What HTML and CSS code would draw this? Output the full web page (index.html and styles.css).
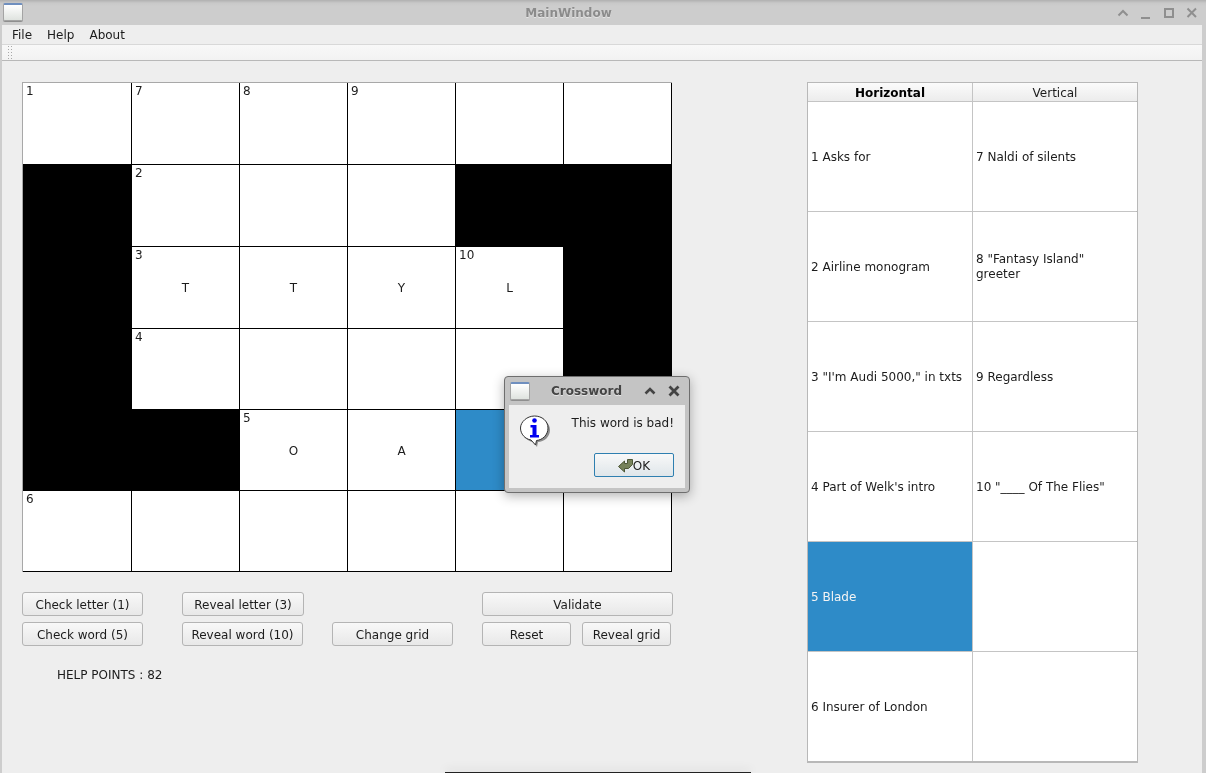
FILE: index.html
```html
<!DOCTYPE html>
<html lang="en">
<head>
<meta charset="utf-8">
<title>MainWindow</title>
<link rel="stylesheet" href="styles.css">
</head>
<body>
<div class="window">
  <header class="titlebar">
    <span class="win-icon"></span>
    <span class="title">MainWindow</span>
    <div class="controls">
      <svg class="ctl" width="14" height="14" viewBox="0 0 14 14"><path d="M2.500 9.500 7 5l4.500 4.500" fill="none" stroke="#8f8f8f" stroke-width="2"/></svg>
      <svg class="ctl" width="14" height="14" viewBox="0 0 14 14"><path d="M2 12h9" fill="none" stroke="#8f8f8f" stroke-width="2"/></svg>
      <svg class="ctl" width="14" height="14" viewBox="0 0 14 14"><path d="M3 3h8v8H3z" fill="none" stroke="#8f8f8f" stroke-width="2"/></svg>
      <svg class="ctl" width="14" height="14" viewBox="0 0 14 14"><path d="m2.500 2.500 8.500 8.500M11 2.500 2.500 11" fill="none" stroke="#8f8f8f" stroke-width="2"/></svg>
    </div>
  </header>
  <div class="inner">
    <nav class="menubar"><span>File</span><span>Help</span><span>About</span></nav>
    <div class="toolbar"><span class="grip"></span></div>
    <main class="content">
      <section class="left">
        <div class="board">
          <div class="cell"><i>1</i></div><div class="cell"><i>7</i></div><div class="cell"><i>8</i></div><div class="cell"><i>9</i></div><div class="cell"></div><div class="cell"></div>
          <div class="cell black"></div><div class="cell"><i>2</i></div><div class="cell"></div><div class="cell"></div><div class="cell black"></div><div class="cell black"></div>
          <div class="cell black"></div><div class="cell"><i>3</i>T</div><div class="cell">T</div><div class="cell">Y</div><div class="cell"><i>10</i>L</div><div class="cell black"></div>
          <div class="cell black"></div><div class="cell"><i>4</i></div><div class="cell"></div><div class="cell"></div><div class="cell"></div><div class="cell black"></div>
          <div class="cell black"></div><div class="cell black"></div><div class="cell"><i>5</i>O</div><div class="cell">A</div><div class="cell blue"></div><div class="cell"></div>
          <div class="cell"><i>6</i></div><div class="cell"></div><div class="cell"></div><div class="cell"></div><div class="cell"></div><div class="cell"></div>
        </div>
        <div class="actions">
          <button class="btn a1">Check letter (1)</button>
          <button class="btn a2">Reveal letter (3)</button>
          <button class="btn a3">Validate</button>
          <button class="btn b1">Check word (5)</button>
          <button class="btn b2">Reveal word (10)</button>
          <button class="btn b3">Change grid</button>
          <button class="btn b4">Reset</button>
          <button class="btn b5">Reveal grid</button>
        </div>
        <p class="points">HELP POINTS : 82</p>
      </section>
      <section class="clues">
        <div class="head strong">Horizontal</div><div class="head">Vertical</div>
        <div class="clue">1 Asks for</div><div class="clue">7 Naldi of silents</div>
        <div class="clue">2 Airline monogram</div><div class="clue wrap">8 "Fantasy Island" greeter</div>
        <div class="clue">3 "I'm Audi 5000," in txts</div><div class="clue">9 Regardless</div>
        <div class="clue">4 Part of Welk's intro</div><div class="clue">10 "____ Of The Flies"</div>
        <div class="clue selected">5 Blade</div><div class="clue"></div>
        <div class="clue">6 Insurer of London</div><div class="clue"></div>
      </section>
    </main>
  </div>
</div>

<div class="dialog">
  <div class="dlg-title">
    <span class="win-icon"></span>
    <span class="dlg-name">Crossword</span>
    <svg width="14" height="14" viewBox="0 0 14 14"><path d="M2.500 9.500 7 5l4.500 4.500" fill="none" stroke="#444" stroke-width="2.600"/></svg>
    <svg width="14" height="14" viewBox="0 0 14 14"><path d="m2.500 2.500 9 9M11.500 2.500l-9 9" fill="none" stroke="#444" stroke-width="2.800"/></svg>
  </div>
  <div class="dlg-body">
    <div class="dlg-main">
      <svg class="info" width="34" height="34" viewBox="0 0 34 34">
        <path d="M17 4c8 0 14 5 14 12s-6 12-12 12l-1 5-4-5C8 27 3 22 3 16S9 4 17 4z" fill="#8d8d8d"/>
        <path d="M15.500 2C23 2 29 7 29 14s-5.500 12-11.500 12.500L16.500 31 12 26C6 25 1.500 20 1.500 14S8 2 15.500 2z" fill="#fff" stroke="#333" stroke-width="1"/>
        <circle cx="15.500" cy="6.500" r="2.300" fill="#0000f0"/>
        <path d="M11.500 11h6v10h2.500v2.500h-9V21h2.500v-7.500h-2z" fill="#0000f0"/>
      </svg>
      <span class="dlg-text">This word is bad!</span>
    </div>
    <button class="ok">
      <svg width="15" height="15" viewBox="0 0 15 15"><path d="M0.500 8.500 6.500 3v2.500H9.500V1.500h5v5l-4 4H6.500V14z" fill="#76825a" stroke="#4c5636" stroke-width="1"/></svg>OK
    </button>
  </div>
</div>

<div class="behind"></div>
</body>
</html>
```

FILE: styles.css
```css
* { box-sizing: border-box; }
html, body { margin: 0; height: 100%; overflow: hidden; }
body {
  width: 1206px;
  height: 773px;
  background: #eeeeee;
  font-family: "DejaVu Sans", sans-serif;
  font-size: 12px;
  color: #1c1c1c;
  position: relative;
}
.window { display: flex; flex-direction: column; height: 773px; background: #cdcdcd; will-change: transform; }
.titlebar {
  height: 25px;
  flex: none;
  display: flex;
  align-items: center;
  position: relative;
  background: linear-gradient(#b0b0b0 0, #c8c8c8 3px, #cdcdcd 6px);
}
.win-icon {
  display: block;
  flex: none;
  width: 20px;
  height: 18px;
  border: 1px solid #a4a4a4;
  border-top: 2px solid #6f8fbf;
  border-radius: 2px;
  background: linear-gradient(#fff, #dfe3df);
  box-shadow: 0 1px 0 #8f8f8f;
}
.titlebar .win-icon { margin: 0 0 2px 3px; }
.title {
  flex: 1;
  text-align: center;
  margin-right: 2px;
  font-weight: bold;
  color: #8b8b8b;
  text-shadow: 0 1px 0 #e4e4e4;
}
.controls { display: flex; gap: 9px; margin-right: 7px; }
.ctl { display: block; }
.inner { flex: 1; margin: 0 4px 0 2px; display: flex; flex-direction: column; background: #eeeeee; min-height: 0; }
.menubar { height: 19px; flex: none; display: flex; align-items: center; padding-left: 10px; gap: 15px; color: #1c1c1c; }
.toolbar {
  height: 17px;
  flex: none;
  background: linear-gradient(#f8f8f8, #f2f2f2);
  border-top: 1px solid #d8d8d8;
  border-bottom: 1px solid #b8b8b8;
  padding-left: 5px;
}
.grip {
  display: block;
  width: 5px;
  height: 15px;
  background-image: radial-gradient(circle, #a8a8a8 0.7px, transparent 0.8px);
  background-size: 3px 3px;
}
.content { flex: 1; display: flex; min-height: 0; }
.left { width: 805px; flex: none; padding: 21px 0 0 20px; }
.board {
  width: 650px;
  display: grid;
  grid-template-columns: 108px repeat(5, 107px);
  grid-template-rows: 81px 81px 81px 80px 80px 80px;
  gap: 1px;
  padding: 0 1px 1px 0;
  background: #000;
  border-left: 1px solid #a8a8a8;
  border-top: 1px solid #a8a8a8;
}
.cell {
  background: #fff;
  position: relative;
  display: flex;
  align-items: center;
  justify-content: center;
  padding-top: 1px;
  color: #1c1c1c;
}
.cell i { position: absolute; left: 3px; top: 1px; font-style: normal; }
.black { background: #000; }
.blue { background: #2e8bc8; }
.actions {
  display: grid;
  grid-template-columns: 121px 39px 122px 28px 121px 29px 89px 11px 91px;
  grid-template-rows: 24px 24px;
  row-gap: 6px;
  margin-top: 20px;
  width: 651px;
}
.btn {
  font: inherit;
  color: #1c1c1c;
  padding: 2px 0 0;
  height: 24px;
  border: 1px solid #b4b4b4;
  border-radius: 3px;
  background: linear-gradient(#f8f8f8, #e8e8e8);
}
.a1 { grid-area: 1 / 1; }
.a2 { grid-area: 1 / 3; }
.a3 { grid-area: 1 / 7 / 2 / 10; }
.b1 { grid-area: 2 / 1; }
.b2 { grid-area: 2 / 3; width: 121px; }
.b3 { grid-area: 2 / 5; }
.b4 { grid-area: 2 / 7; }
.b5 { grid-area: 2 / 9; width: 89px; }
.points { margin: 22px 0 0 35px; line-height: 15px; }
.clues {
  width: 331px;
  height: 681px;
  margin-top: 21px;
  flex: none;
  display: grid;
  grid-template-columns: 164px 164px;
  grid-template-rows: 18px repeat(6, 109px);
  gap: 1px;
  background: #c4c4c4;
  border: 1px solid #b8b8b8;
  border-width: 1px 2px 2px 1px;
}
.head {
  background: linear-gradient(#fbfbfb, #ececec);
  text-align: center;
  line-height: 20px;
  color: #1c1c1c;
  overflow: hidden;
}
.strong { font-weight: bold; color: #000; }
.clue { background: #fff; display: flex; align-items: center; padding: 2px 3px 0; line-height: 15px; color: #1c1c1c; }
.wrap { padding: 0 30px 0 3px; }
.selected { background: #2e8bc8; color: #f4f4f4; }
.dialog {
  position: absolute;
  left: 504px;
  top: 376px;
  width: 186px;
  height: 117px;
  background: #c4c4c4;
  border: 1px solid #6e6e6e;
  border-radius: 4px;
  box-shadow: 0 3px 12px rgba(0,0,0,.3);
  padding: 0 4px 4px;
  display: flex;
  flex-direction: column;
  will-change: transform;
}
.dlg-title { height: 28px; flex: none; display: flex; align-items: center; gap: 10px; margin: 0 4px 0 1px; }
.dlg-title .win-icon { margin: 0; }
.dlg-name { flex: 1; text-align: center; font-weight: bold; color: #444; text-shadow: 0 1px 0 #e4e4e4; }
.dlg-body { flex: 1; background: #eeeeee; display: flex; flex-direction: column; align-items: flex-end; padding: 0 11px 0 0; }
.dlg-main { width: 100%; display: flex; justify-content: space-between; padding: 11px 0 0 10px; height: 48px; }
.dlg-main .dlg-text { line-height: 15px; }
.info { display: block; margin-top: -2px; }
.ok {
  font: inherit;
  color: #1c1c1c;
  width: 80px;
  height: 24px;
  padding: 1px 0 0;
  border: 1px solid #2e7fb0;
  border-radius: 2px;
  background: linear-gradient(#f8f8f8, #dfe6ea);
  display: flex;
  align-items: center;
  justify-content: center;
}
.behind {
  position: absolute;
  left: 445px;
  top: 772px;
  width: 306px;
  height: 1px;
  background: #222;
  box-shadow: 0 -2px 8px rgba(0,0,0,.25);
}
```
